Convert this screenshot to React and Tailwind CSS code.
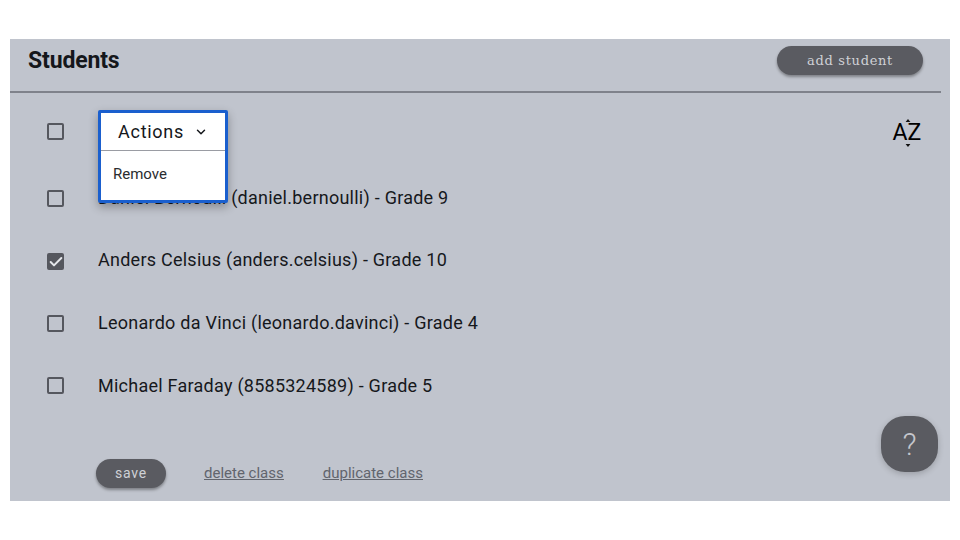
import React from "react";
import { Check, ChevronDown } from "lucide-react";

const students = [
  { label: "Daniel Bernoulli (daniel.bernoulli) - Grade 9", rowClass: "h-[63px]", textClass: "-mt-[4px]", checked: false },
  { label: "Anders Celsius (anders.celsius) - Grade 10", rowClass: "h-[62px]", textClass: "-mt-[5px]", checked: true },
  { label: "Leonardo da Vinci (leonardo.davinci) - Grade 4", rowClass: "h-[62px]", textClass: "-mt-[4px]", checked: false },
  { label: "Michael Faraday (8585324589) - Grade 5", rowClass: "h-[62px]", textClass: "-mt-[3px]", checked: false },
];

function Box({ checked }) {
  return (
    <div
      className={`w-[17px] h-[17px] shrink-0 rounded-[2px] border-2 border-[#55575e] flex items-center justify-center ${
        checked ? "bg-[#55575e]" : ""
      }`}
    >
      {checked && <Check size={16} strokeWidth={3} className="text-[#e4e6ea] shrink-0" />}
    </div>
  );
}

function SortIcon() {
  return (
    <div className="relative w-[28px] h-[28px] flex items-center justify-center text-[#000] text-[23px] leading-none font-['Roboto',sans-serif]">
      <span>AZ</span>
      <svg className="absolute left-[12px] top-0" width="6" height="28" viewBox="0 0 6 28">
        <path d="M3 0 L5.4 3 L0.6 3 Z M3 28 L5.4 25 L0.6 25 Z" fill="#111" />
      </svg>
    </div>
  );
}

export default function App() {
  return (
    <div className="w-[960px] h-[540px] bg-white pt-[39px] px-[10px] font-['Roboto',sans-serif]">
      <div className="relative w-[940px] h-[462px] bg-[#c0c4cd] overflow-hidden">
        <div className="h-[54px] mr-[9px] pl-[18px] pr-[18px] border-b-2 border-[#7f828b] flex justify-between items-start">
          <h1 className="mt-[6px] text-[23px] leading-[32px] font-bold tracking-[-0.15px] text-[#15171b]">Students</h1>
          <button className="mt-[7px] w-[146px] h-[29px] rounded-full bg-[#5a5b61] text-[#cfd1d6] text-[13px] tracking-[0.7px] font-['DejaVu_Serif',serif] shadow-[0_2px_3px_rgba(0,0,0,0.35)]">
            add student
          </button>
        </div>

        <div className="h-[77px] pl-[37px] pr-[29px] flex items-center justify-between">
          <Box />
          <div className="pt-[2px]">
            <SortIcon />
          </div>
        </div>

        <div className="pl-[37px]">
          {students.map((s) => (
            <div key={s.label} className={`flex items-start pt-[20px] gap-[34px] ${s.rowClass}`}>
              <Box checked={s.checked} />
              <span className={`${s.textClass} text-[18px] leading-[24px] tracking-[0.25px] text-[#16181c]`}>{s.label}</span>
            </div>
          ))}
        </div>

        <div className="mt-[40px] pl-[86px] flex items-center gap-[38px]">
          <button className="w-[70px] h-[29px] rounded-full bg-[#5a5b61] text-[#cfd1d6] text-[14px] tracking-[0.8px] shadow-[0_2px_3px_rgba(0,0,0,0.35)]">
            save
          </button>
          <div className="flex gap-[39px] text-[15px] text-[#62656d] underline">
            <a>delete class</a>
            <a>duplicate class</a>
          </div>
        </div>

        <div className="absolute left-[88px] top-[71px] w-[130px] h-[93px] bg-white border-[3px] border-[#1a5fce] rounded-[2px] shadow-[0_4px_10px_rgba(0,0,0,0.3)]">
          <div className="h-[38px] border-b border-[#9a9ca3] flex items-center justify-center gap-[10px] text-[18px] tracking-[0.7px] text-[#15171b]">
            <span>Actions</span>
            <ChevronDown size={14} strokeWidth={2.5} />
          </div>
          <div className="pl-[12px] pt-[13px] text-[15px] leading-[20px] text-[#2a2c30]">Remove</div>
        </div>

        <button className="absolute left-[871px] top-[377px] w-[57px] h-[56px] pt-[3px] rounded-[24px] bg-[#5a5b61] text-[#c4c6cc] text-[31px] font-light shadow-[0_2px_6px_rgba(0,0,0,0.2)] flex items-center justify-center">
          ?
        </button>
      </div>
    </div>
  );
}
